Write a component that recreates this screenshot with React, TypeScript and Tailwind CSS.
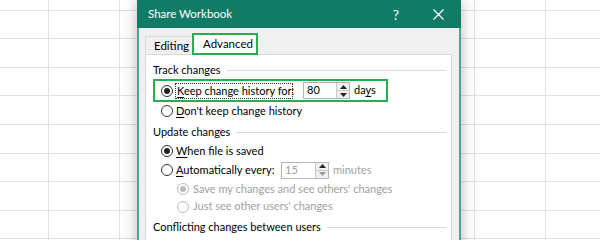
import React from 'react'

const font = { fontFamily: 'Lato, "Noto Sans", sans-serif' }

function Radio({ checked = false, disabled = false }: { checked?: boolean; disabled?: boolean }) {
  return (
    <span
      className={`flex h-[12px] w-[12px] shrink-0 items-center justify-center rounded-full border bg-white ${
        disabled ? 'border-[#bcbcbc]' : 'border-[#333]'
      }`}
    >
      {checked && (
        <span className={`h-[6px] w-[6px] rounded-full ${disabled ? 'bg-[#bcbcbc]' : 'bg-[#222]'}`} />
      )}
    </span>
  )
}

function Spin({ value, disabled = false, width }: { value: string; disabled?: boolean; width: string }) {
  return (
    <div className={`flex h-[17px] shrink-0 ${width} border border-[#b4b4b4] bg-white`}>
      <div className={`flex flex-1 items-center pl-[3px] ${disabled ? 'text-[#a0a0a0]' : 'text-black'}`}>{value}</div>
      <div className="flex w-[13px] flex-col border-l border-[#c8c8c8] bg-[#f0f0f0]">
        <div className="flex flex-1 items-center justify-center border-b border-[#c8c8c8]">
          <svg width="7" height="4" viewBox="0 0 7 4">
            <path d="M0 4 L3.5 0 L7 4 Z" fill="#222" />
          </svg>
        </div>
        <div className="flex flex-1 items-center justify-center">
          <svg width="7" height="4" viewBox="0 0 7 4">
            <path d="M0 0 L3.5 4 L7 0 Z" fill={disabled ? '#999' : '#222'} />
          </svg>
        </div>
      </div>
    </div>
  )
}

function GroupLabel({ text, h = 'h-[18px]', mt = '' }: { text: string; h?: string; mt?: string }) {
  return (
    <div className={`flex items-center ${h} ${mt}`}>
      <span className="shrink-0">{text}</span>
      <span className="ml-[6px] h-px flex-1 bg-[#dcdcdc]" />
    </div>
  )
}

const u = (s: string) => <span className="underline underline-offset-2">{s}</span>

export default function App() {
  const rows = Array.from({ length: 10 })
  const cols = Array.from({ length: 9 })

  return (
    <div className="relative h-[240px] w-[600px] overflow-hidden bg-white" style={font}>
      {/* sheet grid */}
      <div className="-ml-[22px] -mt-[18px] flex flex-col">
        {rows.map((_, r) => (
          <div key={r} className="flex h-[28.6px]">
            {cols.map((_, c) => (
              <div key={c} className="h-full w-[71px] shrink-0 border-b border-r border-[#e2e2e2]" />
            ))}
          </div>
        ))}
      </div>

      {/* dialog */}
      <div className="absolute left-[137px] top-0 flex h-[260px] w-[324px] flex-col whitespace-nowrap border-x-2 border-[#4fa391] bg-[#f0f0f0] text-[11px] text-black shadow-[0_0_14px_rgba(0,0,0,0.28)]">
        <div className="-mx-[2px] flex h-[28px] shrink-0 items-center bg-[#117b66] pl-[11px] text-[11.5px] text-white">
          <span>Share Workbook</span>
          <span className="ml-auto mr-[34px] text-[14px]">?</span>
          <svg width="11" height="11" viewBox="0 0 11 11" className="mr-[17px]">
            <path d="M0.5 0.5 L10.5 10.5 M10.5 0.5 L0.5 10.5" stroke="white" strokeWidth="1.2" />
          </svg>
        </div>

        {/* tabs */}
        <div className="flex h-[26px] shrink-0 items-end pl-[6px] text-[11.5px]">
          <div className="flex h-[18px] w-[47px] items-center border-l border-t border-[#d9d9d9] pl-[8px]">Editing</div>
          <div className="relative z-10 -mb-[1px] flex h-[22px] w-[66px] items-center border-2 border-[#25b04f] bg-white pl-[9px]">
            Advanced
          </div>
        </div>

        {/* panel */}
        <div className="ml-[6px] mr-[7px] flex flex-1 flex-col border border-[#d9d9d9] bg-white pl-[7px] pr-[5px] pt-[7px]">
          <GroupLabel text="Track changes" h="h-[17px]" />
          <div className="flex h-[23px] w-[235px] items-center border-2 border-[#25b04f] pl-[6px]">
            <Radio checked />
            <span className="ml-[2px] w-[118px] shrink-0 border border-dotted border-[#333] px-[1px] leading-[14px]">
              {u('K')}eep change history for:
            </span>
            <div className="ml-[10px]">
              <Spin value="80" width="w-[47px]" />
            </div>
            <span className="ml-[4px]">
              da{u('y')}s
            </span>
          </div>
          <div className="flex h-[18px] items-center pl-[8px]">
            <Radio />
            <span className="ml-[3px]">{u('D')}on't keep change history</span>
          </div>

          <GroupLabel text="Update changes" mt="mt-[3px]" />
          <div className="mt-[1px] flex h-[18px] items-center pl-[8px]">
            <Radio checked />
            <span className="ml-[3px]">{u('W')}hen file is saved</span>
          </div>
          <div className="flex h-[20px] items-center pl-[8px]">
            <Radio />
            <span className="ml-[3px] w-[105px] shrink-0">{u('A')}utomatically every:</span>
            <Spin value="15" disabled width="w-[48px]" />
            <span className="ml-[4px] text-[#a0a0a0]">minutes</span>
          </div>
          <div className="flex h-[18px] items-center pl-[24px] text-[#a0a0a0]">
            <Radio checked disabled />
            <span className="ml-[4px]">Save my changes and see others' changes</span>
          </div>
          <div className="flex h-[17px] items-center pl-[24px] text-[#a0a0a0]">
            <Radio disabled />
            <span className="ml-[4px]">Just see other users' changes</span>
          </div>

          <GroupLabel text="Conflicting changes between users" mt="mt-[3px]" />
        </div>
      </div>
    </div>
  )
}
